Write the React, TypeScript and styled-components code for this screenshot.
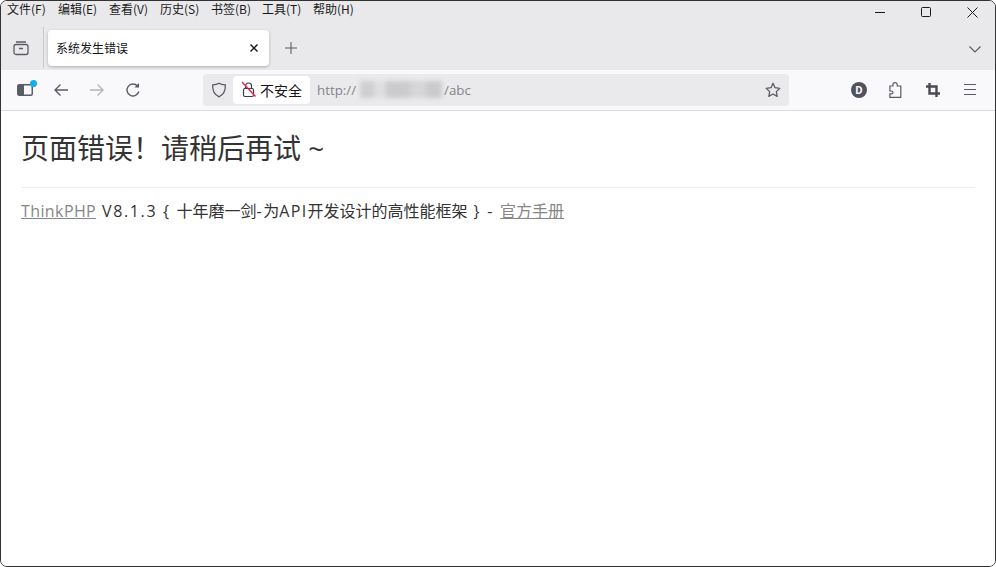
import React from "react";
import styled, { createGlobalStyle } from "styled-components";

const Global = createGlobalStyle`
  html, body { margin: 0; padding: 0; background: #fff; }
  body { font-family: "Noto Sans", "Noto Sans CJK SC", sans-serif; }
  * { box-sizing: border-box; }
`;

const Win = styled.div`
  width: 996px; height: 567px; background: #fff; overflow: hidden;
  border: 1px solid #333; border-radius: 7px;
  display: flex; flex-direction: column;
`;
const Chrome = styled.div`background: #e9e9ec; display: flex; flex-direction: column;`;
const TitleRow = styled.div`display: flex; height: 20px; justify-content: space-between; align-items: flex-start;`;
const Menu = styled.div`display: flex; gap: 12px; padding: 0 0 0 6px;`;
const MenuItem = styled.span`
  font: 12px/16px "Noto Sans CJK SC", sans-serif; color: #1a1a1a; white-space: nowrap; width: 39px;
`;
const Caption = styled.div`display: flex;`;
const CaptionBtn = styled.div`
  width: 46px; height: 22px; display: flex; align-items: center; justify-content: center; color: #1a1a1a;
`;
const TabRow = styled.div`height: 49px; display: flex; align-items: flex-start; position: relative;`;
const TabSide = styled.div`
  width: 43px; height: 41px; margin-top: 6px; border-right: 1px solid #c9c9cd;
  display: flex; align-items: center; justify-content: center; padding: 0 3px 0 0; color: #5b5b66;
`;
const Tab = styled.div`
  width: 221px; height: 36px; margin: 9px 0 0 4px; background: #fff; border-radius: 4px;
  box-shadow: 0 1px 3px rgba(0,0,0,.25); display: flex; align-items: center; justify-content: space-between;
  padding: 0 10px 0 8px; font: 12px/16px "Noto Sans CJK SC", sans-serif; color: #15141a;
`;
const NewTab = styled.div`margin: 20px 0 0 15px; width: 16px; height: 16px; color: #5b5b66; display:flex;`;
const Chevron = styled.div`margin: 21px 0 0 auto; padding-right: 13px; color: #5b5b66; display: flex;`;
const Toolbar = styled.div`
  height: 41px; background: #f9f9fb; border-bottom: 1px solid #d9d9dc; display: flex; align-items: center;
  padding: 0 0 1px 6px; color: #5b5b66;
`;
const NavIcon = styled.div<{ $w: number }>`
  width: ${p => p.$w}px; height: 20px; display: flex; align-items: center; justify-content: center; position: relative;
`;
const Dot = styled.span`
  position: absolute; top: 0; right: 6px; width: 7px; height: 7px; border-radius: 50%; background: #12aef0;
`;
const UrlBar = styled.div`
  width: 586px; height: 32px; margin-left: 52px; background: #eaeaed; border-radius: 4px;
  display: flex; align-items: center; padding: 0 8px 0 0;
`;
const Shield = styled.div`width: 30px; padding-left: 2px; display: flex; justify-content: center; color: #5b5b66;`;
const Badge = styled.div`
  width: 77px; height: 28px; background: #fff; border-radius: 4px; display: flex; align-items: center; gap: 3px;
  padding-left: 8px; font: 14px/18px "Noto Sans CJK SC", sans-serif; color: #15141a;
`;
const Url = styled.div`
  margin-left: 7px; font: 13.3px/18px "Open Sans", sans-serif; color: #83838a; display: flex; align-items: center; flex: 1;
`;
const Blur = styled.span`
  width: 82px; height: 17px; display: inline-block; filter: blur(2px); margin: 0 2px 0 4px;
  background: linear-gradient(90deg, #cfcfd2 0 14px, #dedee1 14px 26px, #cbcbce 26px 50px, #d6d6d9 50px 66px, #cbcbce 66px 82px);
`;
const Star = styled.div`display: flex; color: #5b5b66;`;
const Right = styled.div`margin-left: 52px; display: flex; align-items: center; gap: 0;`;
const Avatar = styled.span`
  width: 16px; height: 16px; border-radius: 50%; background: #52525e; color: #fff;
  font: 700 10px/16px "Noto Sans", sans-serif; text-align: center;
`;
const Page = styled.main`padding: 19px 20px 0; flex: 1; background: #fff;`;
const H1 = styled.h1`
  margin: 0; font: 400 28px/37px "Open Sans", "Noto Sans CJK SC", sans-serif; color: #333; padding-bottom: 20px;
  border-bottom: 1px solid #eee;
`;
const Foot = styled.p`
  margin: 12px 0 0; font: 400 16px/22px "Open Sans", "Noto Sans CJK SC", sans-serif; color: #333; white-space: nowrap;
`;
const Latin = styled.span<{ $track: number }>`letter-spacing: ${p => p.$track}px;`;
const Link = styled.a<{ $track?: number }>`color: #868686; text-decoration: underline; letter-spacing: ${p => p.$track ?? 0}px;`;

const menu = ["文件(F)", "编辑(E)", "查看(V)", "历史(S)", "书签(B)", "工具(T)", "帮助(H)"];

export default function App() {
  return (
    <Win>
      <Global />
      <Chrome>
        <TitleRow>
          <Menu>{menu.map(m => <MenuItem key={m}>{m}</MenuItem>)}</Menu>
          <Caption>
            <CaptionBtn><svg width="10" height="10" viewBox="0 0 10 10"><path d="M0 5.500h10" stroke="currentColor" fill="none" /></svg></CaptionBtn>
            <CaptionBtn><svg width="10" height="10" viewBox="0 0 10 10"><rect x=".5" y=".5" width="9" height="9" rx="1" stroke="currentColor" fill="none" /></svg></CaptionBtn>
            <CaptionBtn><svg width="11" height="11" viewBox="0 0 11 11"><path d="M.5.5l10 10M10.500.5l-10 10" stroke="currentColor" fill="none" /></svg></CaptionBtn>
          </Caption>
        </TitleRow>
        <TabRow>
          <TabSide>
            <svg width="16" height="16" viewBox="0 0 16 16" fill="none" stroke="currentColor" strokeWidth="1.300"><rect x="1" y="4.500" width="14" height="10" rx="2" /><path d="M3 2h10M6 8.500h4" /></svg>
          </TabSide>
          <Tab>
            <span>系统发生错误</span>
            <svg width="10" height="10" viewBox="0 0 10 10"><path d="M1.500 1.500l7 7M8.500 1.500l-7 7" stroke="#15141a" strokeWidth="1.400" fill="none" /></svg>
          </Tab>
          <NewTab><svg width="14" height="14" viewBox="0 0 14 14"><path d="M7 1v12M1 7h12" stroke="currentColor" strokeWidth="1.100" fill="none" /></svg></NewTab>
          <Chevron><svg width="14" height="14" viewBox="0 0 14 14"><path d="M1.500 4.500L7 10l5.500-5.500" stroke="currentColor" strokeWidth="1.200" fill="none" /></svg></Chevron>
        </TabRow>
      </Chrome>
      <Toolbar>
        <NavIcon $w={36}>
          <svg width="16" height="12" viewBox="0 0 16 12" fill="none"><rect x=".75" y=".75" width="14.500" height="10.500" rx="1.500" stroke="currentColor" strokeWidth="1.500" /><rect x="1" y="1" width="6" height="10" fill="currentColor" /></svg>
          <Dot />
        </NavIcon>
        <NavIcon $w={36}>
          <svg width="16" height="16" viewBox="0 0 16 16" fill="none" stroke="currentColor" strokeWidth="1.400"><path d="M15 8H2M7.500 2.500L2 8l5.500 5.500" /></svg>
        </NavIcon>
        <NavIcon $w={36}>
          <svg width="16" height="16" viewBox="0 0 16 16" fill="none" stroke="#b4b4b9" strokeWidth="1.400"><path d="M1 8h13M8.500 2.500L14 8l-5.500 5.500" /></svg>
        </NavIcon>
        <NavIcon $w={36}>
          <svg width="16" height="16" viewBox="0 0 16 16" fill="none" stroke="currentColor" strokeWidth="1.400"><path d="M13.800 9.500A6 6 0 1 1 12.500 4" /><path d="M14 1v4.500H9.500z" fill="currentColor" stroke="none" /></svg>
        </NavIcon>
        <UrlBar>
          <Shield>
            <svg width="16" height="16" viewBox="0 0 16 16" fill="none" stroke="currentColor" strokeWidth="1.300"><path d="M8 1.200c2 1.300 4 1.600 6.300 1.700.3 5.600-1.600 9.800-6.300 11.900C3.300 12.700 1.400 8.500 1.700 2.900 4 2.800 6 2.500 8 1.200z" /></svg>
          </Shield>
          <Badge>
            <svg width="16" height="17" viewBox="0 0 16 17" fill="none"><rect x="2.500" y="7.500" width="10" height="8" rx="1.500" stroke="#3c3c44" strokeWidth="1.200" /><path d="M4.500 7.500V5a3 3 0 0 1 6 0v2.500" stroke="#3c3c44" strokeWidth="1.200" /><path d="M1 1l13.500 14.500" stroke="#e22850" strokeWidth="1.400" /></svg>
            <span>不安全</span>
          </Badge>
          <Url>http://<Blur />/abc</Url>
          <Star>
            <svg width="16" height="16" viewBox="0 0 16 16" fill="none" stroke="currentColor" strokeWidth="1.300" strokeLinejoin="round"><path d="M8 1.300l2 4.400 4.800.6-3.500 3.300.9 4.800L8 12l-4.200 2.400.9-4.800L1.200 6.300 6 5.700z" /></svg>
          </Star>
        </UrlBar>
        <Right>
          <NavIcon $w={36}><Avatar>D</Avatar></NavIcon>
          <NavIcon $w={36}>
            <svg width="13" height="16" viewBox="0 0 13 16" fill="none" stroke="currentColor" strokeWidth="1.200"><path d="M6 .7c1.300 0 2.200.9 2.200 2v1.300h3.600v11.300H.9v-3.400h1.400c1 0 1.700-.6 1.700-1.500S3.300 9 2.300 9H.9V4h3V2.700c0-1.100.8-2 2.100-2z" /></svg>
          </NavIcon>
          <NavIcon $w={38}>
            <svg width="14" height="14" viewBox="0 0 14 14" fill="none" stroke="#4a4a55" strokeWidth="2.400" style={{ marginLeft: 2 }}><path d="M3.500 0v10.500H14M0 3.500h10.500V14" /></svg>
          </NavIcon>
          <NavIcon $w={38}>
            <svg width="12" height="11" viewBox="0 0 12 11" fill="none" stroke="currentColor" strokeWidth="1"><path d="M0 .5h12M0 5.500h12M0 10.500h12" /></svg>
          </NavIcon>
        </Right>
      </Toolbar>
      <Page>
        <H1>页面错误！请稍后再试 ~</H1>
        <Foot><Link $track={0.4}>ThinkPHP</Link><Latin $track={1.65}> V8.1.3 {"{"} </Latin>十年磨一剑<Latin $track={1.6}>-</Latin>为<Latin $track={1.3}>API</Latin>开发设计的高性能框架<Latin $track={1.8}> {"}"} - </Latin><Link>官方手册</Link></Foot>
      </Page>
    </Win>
  );
}
